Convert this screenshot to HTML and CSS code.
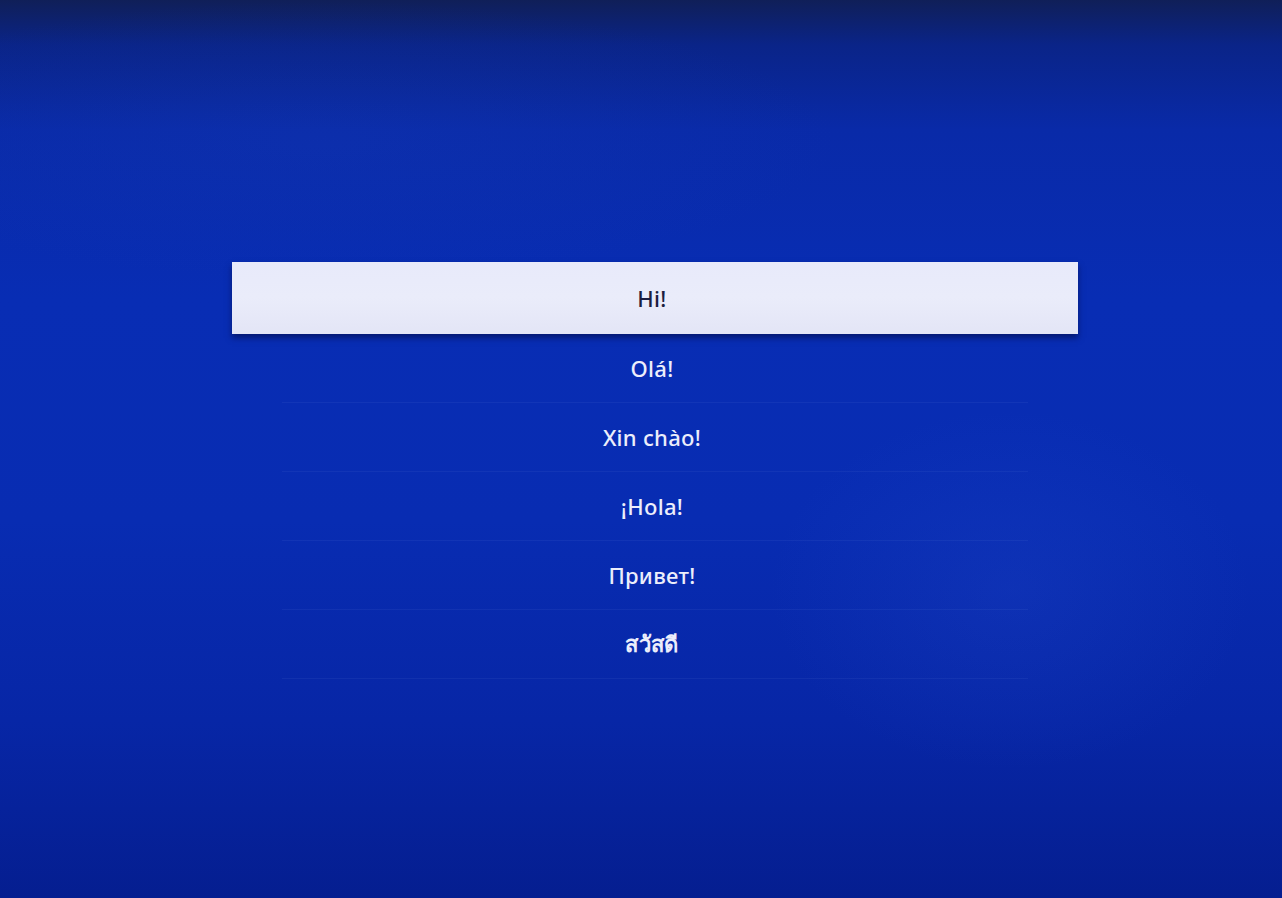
FILE: index.html
```html
<!DOCTYPE html>
<html lang="en">
<head>
<meta charset="utf-8">
<title>Greetings</title>
<link rel="stylesheet" href="styles.css">
</head>
<body>
<main class="screen">
  <ul class="menu">
    <li class="item selected">Hi!</li>
    <li class="item">Olá!</li>
    <li class="item">Xin chào!</li>
    <li class="item">¡Hola!</li>
    <li class="item">Привет!</li>
    <li class="item thai" lang="th">สวัสดี</li>
  </ul>
</main>
</body>
</html>
```

FILE: styles.css
```css
html, body {
  margin: 0;
  padding: 0;
}
body {
  width: 1282px;
  height: 898px;
  overflow: hidden;
  font-family: "Noto Sans", "Open Sans", "DejaVu Sans", sans-serif;
}
.screen {
  width: 1282px;
  height: 898px;
  box-sizing: border-box;
  padding: 262px 0 0 232px;
  background:
    radial-gradient(ellipse 240px 180px at 1010px 590px, rgba(40, 80, 210, 0.2), rgba(40, 80, 210, 0) 100%),
    radial-gradient(ellipse 520px 140px at 320px 140px, rgba(30, 70, 190, 0.15), rgba(30, 70, 190, 0) 100%),
    linear-gradient(to bottom, #101f58 0px, #0a2488 45px, #092aa8 130px, #082db4 300px, #082cb2 520px, #0726a6 720px, #051e90 898px);
}
.menu {
  list-style: none;
  margin: 0;
  padding: 0;
  width: 846px;
}
.item {
  height: 68px;
  display: flex;
  align-items: center;
  justify-content: center;
  padding-right: 6px;
  color: #eceefb;
  font-size: 22px;
  font-weight: 500;
  letter-spacing: 0.3px;
  border-bottom: 1px solid rgba(110, 140, 230, 0.1);
  margin: 0 50px;
}
.item.thai {
  font-weight: 700;
}
.item.selected {
  height: 72px;
  margin: 0;
  border-bottom: none;
  background: linear-gradient(to bottom, #e8eafa, #eaecfa 50%, #e3e5f6);
  color: #1c1e40;
  font-weight: 500;
  box-shadow: 0 4px 6px rgba(0, 10, 60, 0.55);
}
```
